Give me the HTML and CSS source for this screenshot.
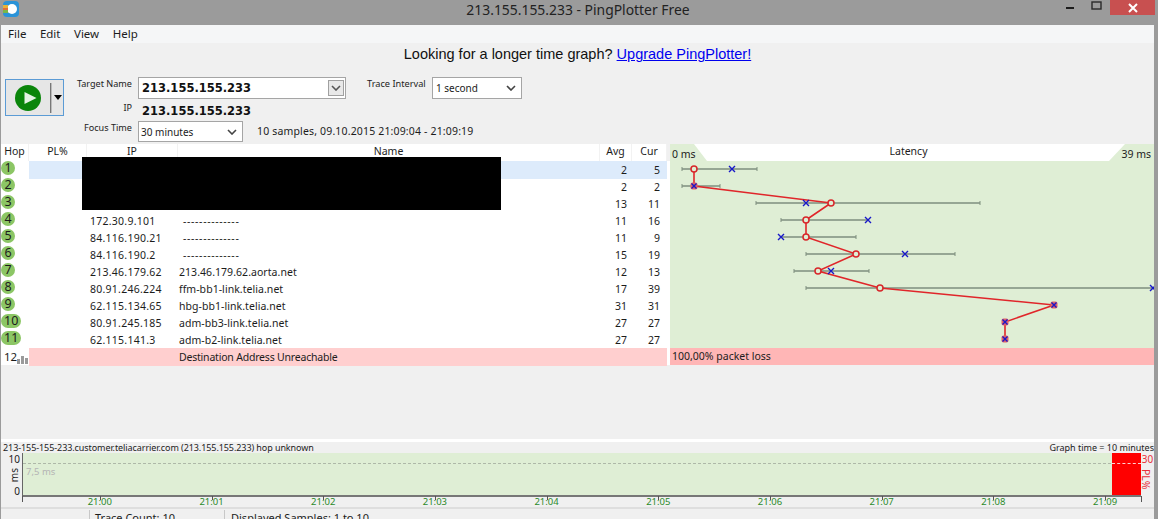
FILE: index.html
```html
<!DOCTYPE html>
<html lang="en">
<head>
<meta charset="utf-8">
<title>213.155.155.233 - PingPlotter Free</title>
<link rel="stylesheet" href="styles.css">
</head>
<body>
<div class="window">
  <header class="titlebar">
    <svg class="appicon" width="20" height="18" viewBox="0 0 20 18">
      <rect x="3" y="1" width="16" height="16" rx="4" fill="#2a93d8"/>
      <circle cx="12" cy="9" r="5" fill="#fff"/>
      <rect x="3" y="5" width="5" height="3" fill="#e8b23a"/>
      <rect x="3" y="8" width="5" height="2" fill="#e0703a"/>
      <rect x="3" y="10" width="5" height="3" fill="#7ab648"/>
    </svg>
    <div class="title">213.155.155.233 - PingPlotter Free</div>
    <div class="winbtns">
      <svg class="minbtn" width="10" height="4" viewBox="0 0 10 4"><rect y="1" width="8" height="2" fill="#1c1c1c"/></svg>
      <svg class="maxbtn" width="12" height="10" viewBox="0 0 12 10"><rect x="1" y="1" width="9" height="7" fill="none" stroke="#2a2a2a" stroke-width="1.4"/></svg>
      <div class="closebtn"><svg width="10" height="10" viewBox="0 0 10 10"><path d="M1 1L9 9M9 1L1 9" stroke="#fff" stroke-width="2"/></svg></div>
    </div>
  </header>
  <div class="client">
    <nav class="menu"><span>File</span><span>Edit</span><span>View</span><span>Help</span></nav>
    <div class="promo">Looking for a longer time graph? <a href="#">Upgrade PingPlotter!</a></div>
    <section class="toolbar">
      <div class="runbtn">
        <svg width="43" height="30" viewBox="0 0 43 30"><circle cx="21" cy="15" r="13" fill="#0a850a"/><path d="M17.500 9L29.500 15L17.500 21Z" fill="#e4f2e4"/></svg>
        <i class="runsep"></i>
        <i class="runarrow"></i>
      </div>
      <div class="fields">
        <div class="frow frow-target">
          <label class="flabel">Target Name</label>
          <div class="combo combo-target"><b>213.155.155.233</b><span class="combobtn"><svg width="10" height="6" viewBox="0 0 10 6"><path d="M1 1L5 5L9 1" fill="none" stroke="#555" stroke-width="1.6"/></svg></span></div>
          <label class="tlabel">Trace Interval</label>
          <div class="combo combo-interval"><span>1 second</span><svg width="10" height="6" viewBox="0 0 10 6"><path d="M1 1L5 5L9 1" fill="none" stroke="#444" stroke-width="1.6"/></svg></div>
        </div>
        <div class="frow frow-ip">
          <label class="flabel">IP</label>
          <b class="ipval">213.155.155.233</b>
        </div>
        <div class="frow frow-focus">
          <label class="flabel">Focus Time</label>
          <div class="combo combo-focus"><span>30 minutes</span><svg width="10" height="6" viewBox="0 0 10 6"><path d="M1 1L5 5L9 1" fill="none" stroke="#444" stroke-width="1.6"/></svg></div>
          <span class="samples">10 samples, 09.10.2015 21:09:04 - 21:09:19</span>
        </div>
      </div>
    </section>
    <main class="trace">
      <div class="table">
        <div class="row head"><div>Hop</div><div>PL%</div><div>IP</div><div>Name</div><div>Avg</div><div>Cur</div></div>
        <div class="row sel"><div><span class="hop">1</span></div><div></div><div></div><div></div><div class="n">2</div><div class="n">5</div></div>
        <div class="row"><div><span class="hop">2</span></div><div></div><div></div><div></div><div class="n">2</div><div class="n">2</div></div>
        <div class="row"><div><span class="hop">3</span></div><div></div><div></div><div></div><div class="n">13</div><div class="n">11</div></div>
        <div class="row"><div><span class="hop">4</span></div><div></div><div class="ip">172.30.9.101</div><div class="dash">--------------</div><div class="n">11</div><div class="n">16</div></div>
        <div class="row"><div><span class="hop">5</span></div><div></div><div class="ip">84.116.190.21</div><div class="dash">--------------</div><div class="n">11</div><div class="n">9</div></div>
        <div class="row"><div><span class="hop">6</span></div><div></div><div class="ip">84.116.190.2</div><div class="dash">--------------</div><div class="n">15</div><div class="n">19</div></div>
        <div class="row"><div><span class="hop">7</span></div><div></div><div class="ip">213.46.179.62</div><div class="name">213.46.179.62.aorta.net</div><div class="n">12</div><div class="n">13</div></div>
        <div class="row"><div><span class="hop">8</span></div><div></div><div class="ip">80.91.246.224</div><div class="name">ffm-bb1-link.telia.net</div><div class="n">17</div><div class="n">39</div></div>
        <div class="row"><div><span class="hop">9</span></div><div></div><div class="ip">62.115.134.65</div><div class="name">hbg-bb1-link.telia.net</div><div class="n">31</div><div class="n">31</div></div>
        <div class="row"><div><span class="hop">10</span></div><div></div><div class="ip">80.91.245.185</div><div class="name">adm-bb3-link.telia.net</div><div class="n">27</div><div class="n">27</div></div>
        <div class="row"><div><span class="hop">11</span></div><div></div><div class="ip">62.115.141.3</div><div class="name">adm-b2-link.telia.net</div><div class="n">27</div><div class="n">27</div></div>
        <div class="row lost"><div class="hop12">12<svg width="11" height="10" viewBox="0 0 11 10"><path d="M0 5h3v5H0zM4 2h3v8H4zM8 4h3v6H8z" fill="#9a9a9a"/></svg></div><div></div><div></div><div class="dest">Destination Address Unreachable</div><div></div><div></div></div>
        <div class="redact"></div>
      </div>
      <div class="graph">
        <div class="ghead"><span>0 ms</span><span class="glabel">Latency</span><span>39 ms</span></div>
        <svg class="gplot" width="484" height="187" viewBox="670 161 484 187">
          <g stroke="#7f8f7f" stroke-width="1.5" fill="none">
            <path d="M682 169H757M682 186H720M756 203H980M781 220H868M781 237H856M806 254H955M794 271H869M806 288H1154"/>
            <path stroke-width="1" d="M682 167v4M757 167v4M682 184v4M720 184v4M756 201v4M980 201v4M781 218v4M856 235v4M806 252v4M955 252v4M794 269v4M869 269v4M806 286v4"/>
          </g>
          <polyline points="694,169 694,186 831,203 806,220 806,237 856,254 818,271 880,288 1054,305 1005,322 1005,339" fill="none" stroke="#e0262a" stroke-width="1.6"/>
          <g fill="#dfeed5" stroke="#d8262a" stroke-width="1.5">
            <circle cx="694" cy="169" r="3"/><circle cx="831" cy="203" r="3"/><circle cx="806" cy="220" r="3"/><circle cx="806" cy="237" r="3"/><circle cx="856" cy="254" r="3"/><circle cx="818" cy="271" r="3"/><circle cx="880" cy="288" r="3"/>
          </g>
          <g fill="#e0606a"><rect x="690.500" y="182.500" width="7" height="7" rx="2"/><rect x="1050.500" y="301.500" width="7" height="7" rx="2"/><rect x="1001.500" y="318.500" width="7" height="7" rx="2"/><rect x="1001.500" y="335.500" width="7" height="7" rx="2"/></g>
          <g stroke="#1818c8" stroke-width="1.4" fill="none">
            <path d="M729 166l6 6M735 166l-6 6M691.500 183.500l5 5M696.500 183.500l-5 5M803 200l6 6M809 200l-6 6M865 217l6 6M871 217l-6 6M778 234l6 6M784 234l-6 6M902 251l6 6M908 251l-6 6M828 268l6 6M834 268l-6 6M1150 285l6 6M1156 285l-6 6M1051.500 302.500l5 5M1056.500 302.500l-5 5M1002.500 319.500l5 5M1007.500 319.500l-5 5M1002.500 336.500l5 5M1007.500 336.500l-5 5"/>
          </g>
        </svg>
        <div class="gloss">100,00% packet loss</div>
      </div>
    </main>
    <div class="spacer"></div>
    <section class="lower">
      <div class="linfo"><span class="hostinfo">213-155-155-233.customer.teliacarrier.com (213.155.155.233) hop unknown</span><span>Graph time = 10 minutes</span></div>
      <div class="lchart">
        <div class="yaxis"><span>10</span><span class="ms">ms</span><span>0</span></div>
        <div class="plot">
          <div class="dashline"></div>
          <span class="refval">7,5 ms</span>
          <div class="plbar"></div>
        </div>
        <div class="plaxis"><span>30</span><span class="pl">PL%</span></div>
      </div>
      <div class="times">
        <span>21:00</span><span>21:01</span><span>21:02</span><span>21:03</span><span>21:04</span><span>21:05</span><span>21:06</span><span>21:07</span><span>21:08</span><span>21:09</span>
      </div>
    </section>
    <footer class="status">
      <div class="s1"></div>
      <div class="s2">Trace Count: 10</div>
      <div class="s3">Displayed Samples: 1 to 10</div>
    </footer>
  </div>
</div>
</body>
</html>
```
FILE: styles.css
```css
* { box-sizing: border-box; }
html, body { margin: 0; height: 100%; overflow: hidden; }
body { font-family: "Noto Sans", "Open Sans", sans-serif; font-size: 10.5px; color: #1c1c1c; }
.window { width: 1158px; height: 519px; background: #9b9b9b; display: flex; flex-direction: column; overflow: hidden; }

.titlebar { height: 25px; flex: none; display: flex; align-items: flex-start; position: relative; }
.appicon { flex: none; }
.title { position: absolute; left: 0; right: 2px; top: 0; text-align: center; font-size: 13.9px; line-height: 20px; color: #222; }
.winbtns { margin-left: auto; display: flex; align-items: flex-start; position: relative; }
.minbtn { margin-top: 6px; margin-right: 15px; }
.maxbtn { margin-top: 1px; margin-right: 7px; }
.closebtn { width: 45px; height: 15px; background: #c85050; display: flex; align-items: center; justify-content: center; margin-right: 3px; }

.client { flex: 1; margin: 0 4px 0 1px; background: #f0f0f0; display: flex; flex-direction: column; min-height: 0; overflow: hidden; }

.menu { height: 18px; flex: none; background: #f5f6f7; display: flex; gap: 13.5px; padding-left: 7px; font-size: 11.5px; line-height: 18px; }
.promo { height: 36px; flex: none; padding-top: 1px; text-align: center; font: 14.5px/20px "Liberation Sans", Arial, sans-serif; color: #111; }
.promo a { color: #0000ee; }

.toolbar { height: 65px; flex: none; display: flex; padding-left: 4px; }
.runbtn { width: 59px; height: 37px; border: 1px solid #5b9bd5; background: #e6e6e6; display: flex; align-items: center; padding-left: 1px; }
.runsep { width: 1px; height: 30px; background: #777; border-right: 1px solid #bbb; box-sizing: content-box; }
.runarrow { width: 0; height: 0; margin-left: 2px; border: 4px solid transparent; border-top: 5px solid #000; border-bottom: 0; }

.fields { display: flex; flex-direction: column; margin-left: -1px; margin-top: -2px; }
.frow { display: flex; align-items: flex-start; }
.frow-target { height: 24px; }
.frow-ip { height: 20px; }
.frow-focus { height: 22px; }
.flabel { width: 70px; padding-right: 1px; text-align: right; font-size: 9.1px; line-height: 14px; color: #222; flex: none; }
.combo { background: #fff; border: 1px solid #a5a5a5; display: flex; align-items: center; justify-content: space-between; flex: none; margin-left: 5px; }
.combo-target { width: 208px; height: 22px; padding-left: 3px; }
.combo-target b, .ipval { font: bold 11.5px/16px "DejaVu Sans", Verdana, sans-serif; color: #111; }
.combobtn { width: 16px; height: 16px; margin-right: 1px; background: #e8e8e8; border: 1px solid #a0a0a0; display: flex; align-items: center; justify-content: center; }
.tlabel { margin-left: 21px; font-size: 9.2px; line-height: 14px; color: #222; width: 60px; white-space: nowrap; }
.combo-interval { width: 90px; height: 22px; padding: 0 5px 0 3px; font-size: 10px; }
.ipval { margin-left: 9px; margin-top: 2px; }
.combo-focus { width: 105px; height: 21px; padding: 0 5px 0 2px; font-size: 10px; }
.samples { margin-left: 14px; font-size: 10.5px; letter-spacing: 0.16px; line-height: 20px; white-space: nowrap; }

.trace { flex: none; height: 221px; display: flex; gap: 3px; background: linear-gradient(#f0f0f0 17px, #fff 17px); }
.table { width: 666px; flex: none; background: #fff; position: relative; }
.row { height: 17px; display: grid; grid-template-columns: 28px 58px 91px 422px 32px 35px; line-height: 18px; white-space: nowrap; }
.row > div { min-width: 0; }
.head { text-align: center; background: #fff; line-height: 15px; }
.head > div { border-right: 1px solid #f2f2f2; }
.sel > div:not(:first-child) { background: #ddebfb; }
.ip { padding-left: 3px; letter-spacing: 0.25px; }
.name { padding-left: 1px; letter-spacing: 0.05px; }
.dest { padding-left: 1px; letter-spacing: -0.2px; }
.dash { padding-left: 5px; letter-spacing: 0.65px; }
.n { text-align: right; padding-right: 5px; }
.row .n:last-child { padding-right: 7px; }
.hop { display: inline-block; min-width: 14px; height: 14px; margin: 0; padding: 0 3px; border-radius: 7px; background: #8cc665; text-align: center; font-size: 12.5px; line-height: 14px; vertical-align: top; }
.lost > div:not(:first-child) { background: #ffcfcf; }
.hop12 { display: flex; align-items: flex-end; padding-left: 3px; font-size: 11.5px; line-height: 14px; height: 17px; padding-bottom: 1px; }
.hop12 svg { flex: none; }
.redact { position: absolute; left: 81px; top: 13px; width: 419px; height: 53px; background: #000; }

.graph { width: 484px; flex: none; display: flex; flex-direction: column; background: #dfeed5; }
.ghead { height: 17px; flex: none; display: flex; justify-content: space-between; align-items: flex-end; padding: 0 3px 1px 2px; position: relative; line-height: 11px; }
.ghead::before { content: ""; position: absolute; left: 24px; right: 29px; top: 0; bottom: 0; background: #fff; clip-path: polygon(0 0, 100% 0, calc(100% - 16px) 100%, 13px 100%); }
.ghead span { position: relative; }
.ghead .glabel { align-self: flex-start; line-height: 15px; }
.gplot { display: block; flex: none; }
.gloss { height: 17px; flex: none; background: #ffb6b6; line-height: 17px; padding-left: 2px; }

.spacer { height: 74px; flex: none; }
.lower { flex: none; height: 68px; border-top: 3px solid #fff; display: flex; flex-direction: column; }
.linfo { height: 11px; flex: none; display: flex; justify-content: space-between; font-size: 9px; line-height: 11px; padding-left: 2px; white-space: nowrap; color: #222; }
.hostinfo { letter-spacing: -0.08px; }
.lchart { height: 44px; flex: none; display: flex; }
.yaxis { width: 22px; flex: none; display: flex; flex-direction: column; justify-content: space-between; align-items: flex-end; padding-right: 2px; font-size: 10px; line-height: 12px; color: #222; border-right: 1px solid #666; }
.ms { writing-mode: vertical-rl; transform: rotate(180deg); font-size: 10px; line-height: 12px; }
.plot { flex: none; width: 1118px; background: #dfeed5; border-bottom: 2px solid #777; position: relative; }
.dashline { position: absolute; left: 0; right: 0; top: 10px; border-top: 1px dashed #aeb8a8; }
.refval { position: absolute; left: 3px; top: 12px; font-size: 9.5px; color: #b4b4b4; }
.plbar { position: absolute; right: 0; top: 0; bottom: 0; width: 29px; background: #f00; }
.plbar::after { content: ""; position: absolute; left: 0; right: 0; top: 10px; border-top: 1px dashed #ffd0d0; }
.plaxis { width: 13px; flex: none; display: flex; flex-direction: column; align-items: center; font-size: 10px; color: #e8303a; line-height: 13px; }
.pl { writing-mode: vertical-rl; margin-top: 3px; margin-left: -3px; font-size: 10.5px; line-height: 12px; white-space: nowrap; }
.times { height: 10px; flex: none; display: grid; grid-template-columns: repeat(10, 111.7px); padding-left: 43px; font-size: 9.5px; line-height: 9px; color: #2a8a2a; text-align: center; position: relative; }
.times span { position: relative; }
.times span::before { content: ""; position: absolute; left: 50%; top: -1px; width: 1px; height: 4px; background: #555; }
.times::before, .times::after { content: ""; position: absolute; top: -1px; width: 1px; height: 6px; background: #555; }
.times::before { left: 21px; }
.times::after { left: 1140px; }

.status { flex: 1; border-top: 2px solid #dedede; display: flex; font: 11px/16px "Noto Sans", sans-serif; min-height: 0; padding-top: 1px; }
.s1 { width: 89px; border-right: 1px solid #c8c8c8; }
.s2 { width: 135px; padding-left: 5px; border-right: 1px solid #c8c8c8; }
.s3 { padding-left: 6px; }
```
